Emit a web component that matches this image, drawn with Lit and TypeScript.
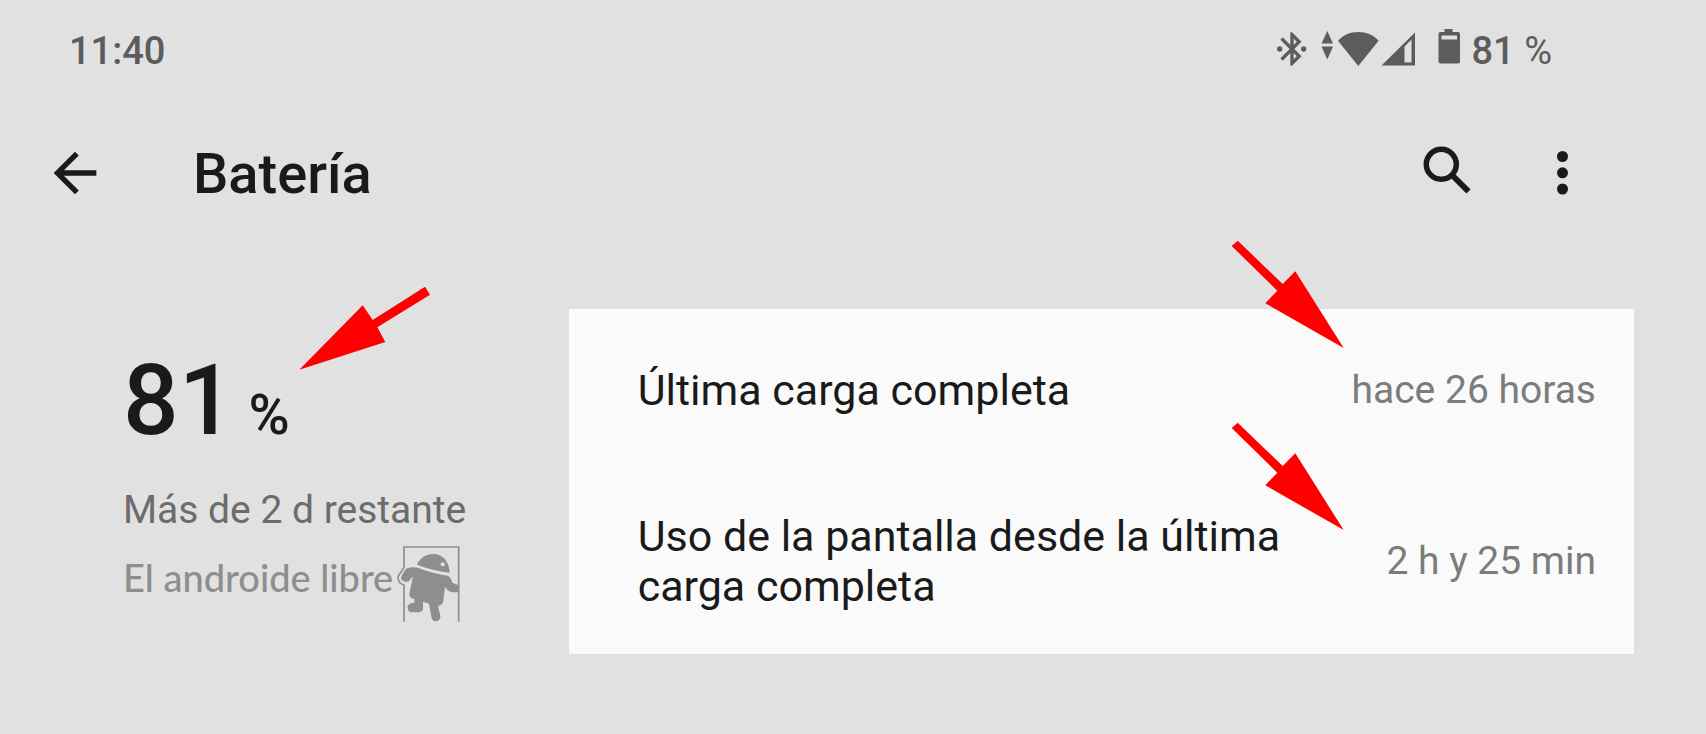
import { LitElement, html, css, svg } from "lit";
import { customElement } from "lit/decorators.js";

const rightPointer = svg`<polygon points="0.7,6 6.7,0.7 51.7,44 64.3,31.3 112.7,108 34.3,63.3 46.3,50.7"></polygon>`;

@customElement("app-root")
export class AppRoot extends LitElement {
  static styles = css`
    :host {
      display: block;
      min-height: 100vh;
      box-sizing: border-box;
      background: #e1e1e1;
      color: #1a1a1a;
      font-family: Roboto, "Liberation Sans", sans-serif;
    }
    svg {
      display: block;
      flex: none;
    }
    .status {
      display: flex;
      justify-content: space-between;
      padding: 29px 154px 0 69px;
      font-size: 38px;
      line-height: 44px;
      font-weight: 500;
      color: #5c5c5c;
    }
    .indicators {
      display: flex;
      align-items: flex-start;
    }
    .indicators svg {
      fill: currentColor;
    }
    .level {
      margin-left: 12px;
      white-space: pre;
    }
    .unit {
      font-weight: 400;
    }
    .bar {
      display: flex;
      align-items: center;
      padding: 68px 112px 0 43px;
    }
    .action {
      width: 64px;
      height: 64px;
      padding: 0;
      border: 0;
      background: none;
      color: inherit;
    }
    .action svg {
      fill: currentColor;
    }
    .title {
      flex: 1;
      margin: 2px 0 0 86px;
      font-size: 56px;
      line-height: 60px;
      font-weight: 500;
    }
    .more {
      margin-left: 51px;
    }
    .content {
      display: grid;
      grid-template-columns: minmax(0, 1fr) minmax(0, 2fr);
      column-gap: 36px;
      align-items: start;
      padding: 104px 72px 40px 0;
    }
    .gauge {
      position: relative;
      padding: 42px 0 0 123px;
    }
    .percent {
      display: flex;
      align-items: baseline;
      gap: 14px;
      font-size: 98px;
      line-height: 100px;
      font-weight: 500;
    }
    .sign {
      font-size: 56px;
      line-height: 60px;
    }
    .remaining {
      margin: 37px 0 0;
      font-size: 39px;
      line-height: 44px;
      color: #6c6c6c;
      white-space: nowrap;
    }
    .brand {
      display: flex;
      align-items: flex-start;
      gap: 4px;
      margin-top: 13px;
      font-family: Lato, sans-serif;
      font-size: 38px;
      font-weight: 500;
      line-height: 64px;
      color: #8e8e8e;
      white-space: nowrap;
    }
    .card {
      position: relative;
      display: grid;
      row-gap: 10px;
      margin: 0;
      padding-top: 13px;
      background: #fafafa;
    }
    .row {
      display: flex;
      align-items: center;
      justify-content: space-between;
      gap: 24px;
      padding: 43px 38px 43px 69px;
    }
    .label {
      max-width: 660px;
      font-size: 43px;
      line-height: 50px;
    }
    .value {
      margin: 0;
      font-size: 39px;
      line-height: 44px;
      color: #7c7c7c;
      white-space: nowrap;
    }
    .pointer {
      position: absolute;
      fill: #ff0000;
    }
    .to-percent {
      left: 299px;
      top: -23px;
    }
    .to-charge {
      right: 290px;
      top: -69px;
    }
    .to-usage {
      right: 290px;
      top: 113px;
    }
  `;

  render() {
    return html`
      <div class="status">
        <span>11:40</span>
        <div class="indicators">
          <svg width="48" height="40" viewBox="0 0 48 40" aria-label="Bluetooth">
            <g transform="scale(1.667)">
              <path d="M17.71 7.71L12 2h-1v7.59L6.41 5 5 6.41 10.59 12 5 17.59 6.41 19 11 14.41V22h1l5.71-5.71-4.3-4.29 4.3-4.29zM13 5.83l1.88 1.88L13 9.59V5.83zm1.88 10.46L13 18.17v-3.76l1.88 1.88z"></path>
              <circle cx="4.6" cy="12" r="1.6"></circle>
              <circle cx="19" cy="12" r="1.6"></circle>
            </g>
          </svg>
          <svg width="60" height="40" viewBox="0 0 60 40" aria-label="Wi-Fi">
            <path d="M1.5 14.5 7.3 2l5.7 12.5zM1.5 17.500H13L7.3 30.5z"></path>
            <path d="M38.3 37 18 11.8C23 6 30 3 38.300 3s15.300 3 20.300 8.800z"></path>
          </svg>
          <svg width="36" height="40" viewBox="0 0 36 40" aria-label="Señal móvil">
            <path fill-rule="evenodd" d="M1.500 36.500 35 3.500v33zM24.500 17.500v16H31.500V10.500z"></path>
          </svg>
          <svg width="44" height="40" viewBox="0 0 44 40" aria-label="Batería">
            <path fill-rule="evenodd" d="M28.500 0h8v3h5.500a2 2 0 0 1 2 2V32.500a2 2 0 0 1-2 2H24.500a2 2 0 0 1-2-2V5a2 2 0 0 1 2-2h4zM25.500 6.500v4H41v-4z"></path>
          </svg>
          <span class="level">81 <span class="unit">%</span></span>
        </div>
      </div>

      <header class="bar">
        <button class="action" aria-label="Atrás">
          <svg width="64" height="64" viewBox="0 0 24 24">
            <path d="M20 11H7.830l5.590-5.590L12 4l-8 8 8 8 1.410-1.410L7.830 13H20v-2z"></path>
          </svg>
        </button>
        <h1 class="title">Batería</h1>
        <button class="action" aria-label="Buscar">
          <svg width="64" height="64" viewBox="0 0 64 64">
            <circle cx="26.300" cy="23.300" r="15" fill="none" stroke="currentColor" stroke-width="5.500"></circle>
            <path d="M36.500 33.500 53.500 50.500" stroke="currentColor" stroke-width="6"></path>
          </svg>
        </button>
        <button class="action more" aria-label="Más opciones">
          <svg width="64" height="64" viewBox="0 0 64 64">
            <circle cx="32.500" cy="15.500" r="5.500"></circle>
            <circle cx="32.500" cy="31.800" r="5.500"></circle>
            <circle cx="32.500" cy="48" r="5.500"></circle>
          </svg>
        </button>
      </header>

      <main class="content">
        <section class="gauge">
          <div class="percent"><span>81</span><span class="sign">%</span></div>
          <p class="remaining">Más de 2 d restante</p>
          <div class="brand">
            <span>El androide libre</span>
            <svg width="64" height="78" viewBox="858 195 192 234" aria-hidden="true">
              <path d="M879 425V316C868 312 861 303 861 292C862 284 868 280 872 274C874 269 876 265 879 262V201H1043V425" fill="none" stroke="#8e8e8e" stroke-width="5"></path>
              <path d="M918 254C927 234 945 222 967 222C996 222 1015 246 1016 278C982 274 949 266 918 254z" fill="#8e8e8e"></path>
              <circle cx="995" cy="253" r="6" fill="#e1e1e1"></circle>
              <path d="M884 268C894 260 909 261 920 263C950 275 982 283 1010 287C1017 290 1021 297 1024 308L1043 316V337H1024C1012 334 1005 326 1002 320L997 362C995 372 989 377 981 377L988 407C989 419 981 424 974 424C966 424 962 417 961 410L954 371L936 365V384C936 393 930 397 922 397H903C895 397 890 390 890 383C890 373 896 369 910 368V357C900 355 894 350 895 341L906 289L896 301C890 308 877 307 871 298C868 290 877 279 884 268z" fill="#8e8e8e"></path>
            </svg>
          </div>
          <svg class="pointer to-percent" width="132" height="84" aria-hidden="true">
            <polygon points="0.300,83.700 63.700,19.300 73.700,34 126,0.700 131,8.700 78.300,41.300 86.300,56"></polygon>
          </svg>
        </section>

        <dl class="card">
          <div class="row">
            <dt class="label">Última carga completa</dt>
            <dd class="value">hace 26 horas</dd>
          </div>
          <div class="row">
            <dt class="label">Uso de la pantalla desde la última carga completa</dt>
            <dd class="value">2 h y 25 min</dd>
          </div>
          <svg class="pointer to-charge" width="113" height="108" aria-hidden="true">${rightPointer}</svg>
          <svg class="pointer to-usage" width="113" height="108" aria-hidden="true">${rightPointer}</svg>
        </dl>
      </main>
    `;
  }
}
